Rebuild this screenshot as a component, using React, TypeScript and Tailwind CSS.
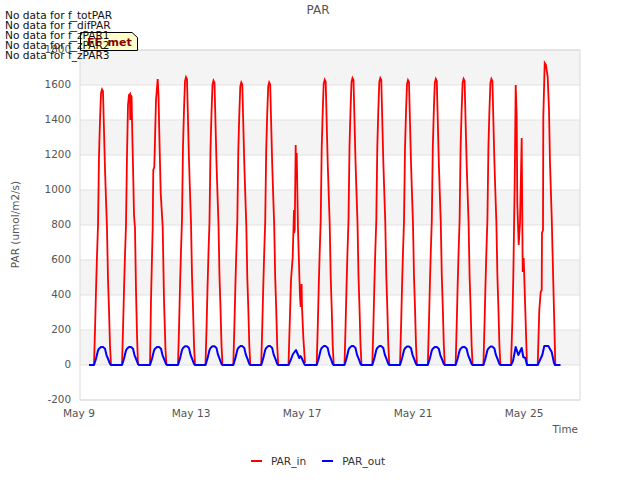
const RED_PROFILE: [number, number][] = [
  [-8, 0], [-7, 0.126], [-6, 0.27], [-5, 0.397], [-4, 0.505], [-3, 0.76], [-2, 0.886], [-1, 0.986],
  [0, 1], [1, 0.993], [2, 0.85], [3, 0.71], [4, 0.6], [5, 0.495], [6, 0.31], [7, 0.2], [8, 0.07], [9, 0],
];
const BLUE_PROFILE: [number, number][] = [
  [-8, 0], [-6, 0.35], [-4, 0.8], [-3, 0.9], [-1, 1], [1, 1], [3, 0.9], [4.5, 0.55], [6.5, 0.28], [8, 0.06], [9, 0],
];

const ZERO = 365;
const valY = (v: number) => ZERO - (v * 35) / 200;
type Pt = [number, number];

const days: { x: number; peak: number; blue: number }[] = [
  { x: 102, peak: 1575, blue: 103 },
  { x: 186, peak: 1645, blue: 107 },
  { x: 213.5, peak: 1625, blue: 107 },
  { x: 241.3, peak: 1615, blue: 108 },
  { x: 269.2, peak: 1615, blue: 108 },
  { x: 324.7, peak: 1630, blue: 108 },
  { x: 352.5, peak: 1640, blue: 108 },
  { x: 380.3, peak: 1640, blue: 108 },
  { x: 408, peak: 1628, blue: 106 },
  { x: 435.8, peak: 1635, blue: 103 },
  { x: 463.6, peak: 1635, blue: 103 },
  { x: 491.4, peak: 1635, blue: 105 },
];

const prof = (p: [number, number][], x: number, v: number): Pt[] =>
  p.map(([dx, f]) => [x + dx, valY(v * f)]);

const special: Pt[][] = [
  [[122, 365], [123, 330], [124, 290], [125, 255], [126, 225], [127, 155], [128, 105], [129, 95], [130, 94], [130.2, 120], [130.8, 95], [131.6, 97], [132.2, 130], [133, 165], [134, 215], [135, 228], [136, 290], [137, 335], [138, 365]],
  [[150, 365], [151, 300], [152.7, 227], [153.3, 170], [154.3, 167], [156, 100], [157.7, 79], [158.5, 95], [159.3, 133], [160.7, 193], [162.7, 227], [164, 300], [165.5, 350], [166.5, 365]],
  [[288.5, 365], [291, 280], [292.7, 257], [294, 210], [294.2, 233], [294.7, 230], [295.7, 145], [295.8, 170], [296.7, 153], [298, 230], [300, 297], [300.7, 307], [301.6, 284], [302, 307], [303.3, 337], [305, 363]],
  [[511, 365], [512.3, 323], [513.3, 277], [514.7, 183], [515.7, 85], [516.7, 117], [517.3, 203], [518.7, 245], [520, 223], [521.7, 138], [522.7, 272], [523.7, 258], [525.3, 310], [527, 365]],
  [[537.7, 365], [539.3, 310], [540.7, 292], [541.7, 290], [542, 233], [543, 230], [543.3, 117], [544.7, 63], [546, 65], [547.7, 77], [549, 110], [550, 163], [551.7, 217], [553.3, 283], [555.3, 365]],
];

const redLines: Pt[][] = [...days.map((d) => prof(RED_PROFILE, d.x, d.peak)), ...special];

const bluePts: Pt[] = (() => {
  const segs: Pt[][] = [
    ...days.map((d) => prof(BLUE_PROFILE, d.x, d.blue)),
    prof(BLUE_PROFILE, 130, 103),
    prof(BLUE_PROFILE, 158, 103),
    [[288.5, 365], [290.7, 360], [293, 354], [296, 350], [299.3, 358], [300.5, 356], [301.7, 358], [304.3, 364], [305, 365]],
    [[511, 365], [513, 361], [515.7, 347], [518.3, 355], [521.7, 348], [523.3, 357], [525.3, 358], [527, 365]],
    [[537.7, 365], [540, 360], [542.3, 355], [544.3, 346], [548.3, 346], [551.7, 352], [554, 363], [555, 365]],
  ];
  segs.sort((a, b) => a[0][0] - b[0][0]);
  return [[89, 365] as Pt, ...segs.flat(), [560.5, 365] as Pt];
})();

const toPts = (p: Pt[]) => p.map(([x, y]) => `${x},${y.toFixed(1)}`).join(" ");

const yTicks = [1800, 1600, 1400, 1200, 1000, 800, 600, 400, 200, 0, -200];
const bands = [50, 120, 190, 260, 330];
const xTicks: [number, string][] = [
  [79, "May 9"], [191, "May 13"], [302, "May 17"], [413, "May 21"], [524, "May 25"],
];
const FONT = "'DejaVu Sans', sans-serif";

export default function App() {
  return (
    <div className="relative flex h-[480px] w-[640px] flex-col overflow-hidden bg-white font-['DejaVu_Sans',sans-serif]">
      <div className="flex h-[20px] items-center justify-center text-[12px] leading-none text-[#555555]">
        <span className="-translate-x-[2px]">PAR</span>
      </div>

      <svg width="640" height="420" viewBox="0 20 640 420" className="block" fontFamily={FONT}>
        {bands.map((y) => (
          <rect key={y} x="80" y={y} width="500" height="35" fill="#f4f4f4" />
        ))}
        {yTicks.map((v) => (
          <line key={v} x1="80" x2="580" y1={valY(v)} y2={valY(v)} stroke="#e2e2e2" strokeWidth="1" />
        ))}
        <rect x="80" y="50" width="500" height="350" fill="none" stroke="#d9d9d9" strokeWidth="1" />
        {yTicks.map((v) => (
          <text key={v} x="71" y={valY(v) + 3.2} textAnchor="end" fontSize="10.4" fill="#555555">
            {v}
          </text>
        ))}
        {xTicks.map(([x, t]) => (
          <text key={t} x={x} y="417" textAnchor="middle" fontSize="10.6" fill="#555555">
            {t}
          </text>
        ))}
        <text x="578" y="433" textAnchor="end" fontSize="10.4" fill="#555555">
          Time
        </text>
        <text
          transform="translate(18.5 224.5) rotate(-90)"
          textAnchor="middle"
          fontSize="10.5"
          fill="#555555"
        >
          PAR (umol/m2/s)
        </text>
        {redLines.map((p, i) => (
          <polyline key={i} points={toPts(p)} fill="none" stroke="#ff0000" strokeWidth="1.8" strokeLinejoin="miter" />
        ))}
        <polyline points={toPts(bluePts)} fill="none" stroke="#0000ff" strokeWidth="2" strokeLinejoin="round" />
      </svg>

      <div className="flex h-[40px] items-center justify-center pt-[2px] pr-[4px] text-[10.6px] leading-none text-[#333333]">
        <span className="h-[2px] w-[11px] bg-[#ff0000]" />
        <span className="ml-[9px]">PAR_in</span>
        <span className="ml-[16px] h-[2px] w-[11px] bg-[#0000ff]" />
        <span className="ml-[9px]">PAR_out</span>
      </div>

      <svg width="58" height="20" viewBox="0 0 58 20" className="absolute left-[80px] top-[32px]">
        <path d="M0.5 0.5H52L57.5 5.5V18.5H0.5Z" fill="#ffffcc" stroke="#000000" strokeWidth="1" />
      </svg>
      <div className="absolute left-[87px] top-[36px] text-[11px] font-bold leading-[13px] text-[#8b0000]">
        FF_met
      </div>

      <div className="absolute left-[5px] top-[10px] text-[10.6px] leading-[10px] text-[#111111]">
        <div>No data for f_totPAR</div>
        <div>No data for f_difPAR</div>
        <div>No data for f_zPAR1</div>
        <div>No data for f_zPAR2</div>
        <div>No data for f_zPAR3</div>
      </div>
    </div>
  );
}
